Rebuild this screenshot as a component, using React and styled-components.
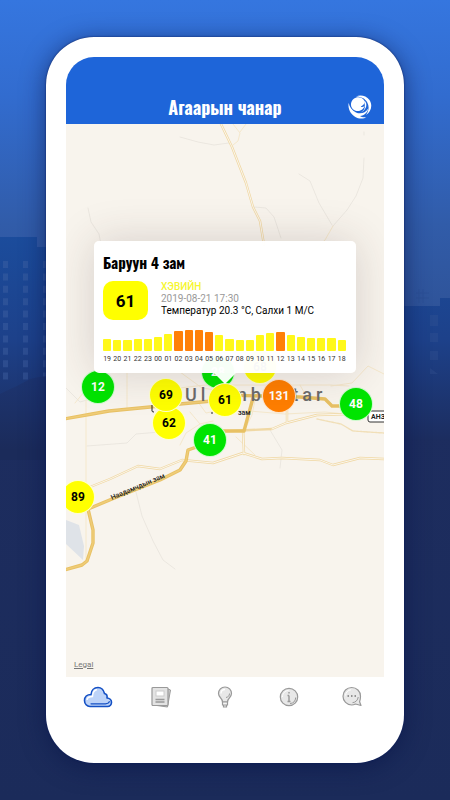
import React, { useState } from 'react';
import styled, { createGlobalStyle } from 'styled-components';

const YELLOW = '#ffff00';
const GREEN = '#00e400';
const ORANGE = '#ff7e00';

// x is measured from the middle of the map, y from its top
const stations = [
  { value: 12, x: -127, y: 263, color: GREEN },
  { value: 28, x: -7, y: 248, color: GREEN },
  { value: 68, x: 35, y: 243, color: YELLOW },
  { value: 62, x: -56, y: 299, color: YELLOW },
  { value: 69, x: -59, y: 271, color: YELLOW },
  { value: 131, x: 54, y: 272, color: ORANGE },
  { value: 48, x: 131, y: 280, color: GREEN },
  { value: 41, x: -15, y: 316, color: GREEN },
  { value: 61, x: 0, y: 276, color: YELLOW },
  { value: 89, x: -147, y: 373, color: YELLOW },
];

const hours = [
  ['19', 12],
  ['20', 11],
  ['21', 11],
  ['22', 12],
  ['23', 12],
  ['00', 14],
  ['01', 17],
  ['02', 20],
  ['03', 21],
  ['04', 21],
  ['05', 19],
  ['06', 16],
  ['07', 12],
  ['08', 11],
  ['09', 11],
  ['10', 16],
  ['11', 18],
  ['12', 19],
  ['13', 16],
  ['14', 14],
  ['15', 13],
  ['16', 13],
  ['17', 13],
  ['18', 11],
];

const Skyline = () => (
  <Backdrop viewBox='0 0 450 800' preserveAspectRatio='none' aria-hidden='true'>
    <defs>
      <linearGradient id='sky' x1='0' y1='0' x2='0' y2='1'>
        <stop offset='0' stopColor='#3576df' />
        <stop offset='0.12' stopColor='#326ccf' />
        <stop offset='0.28' stopColor='#315ca9' />
        <stop offset='0.38' stopColor='#2f549a' />
        <stop offset='0.52' stopColor='#1d2d5f' />
        <stop offset='1' stopColor='#1b2b5a' />
      </linearGradient>
      <linearGradient id='tower' x1='0' y1='237' x2='0' y2='440' gradientUnits='userSpaceOnUse'>
        <stop offset='0' stopColor='#1b4c9c' />
        <stop offset='0.5' stopColor='#1d418a' />
        <stop offset='1' stopColor='#1c2d5f' />
      </linearGradient>
      <linearGradient id='hill' x1='0' y1='376' x2='0' y2='450' gradientUnits='userSpaceOnUse'>
        <stop offset='0' stopColor='#1d3571' />
        <stop offset='1' stopColor='#1b2b5a' />
      </linearGradient>
    </defs>
    <rect width='450' height='800' fill='url(#sky)' />
    <path d='M0 237H37V247H60V440H0Z' fill='url(#tower)' />
    <path d='M390 306H440V298H450V440H390Z' fill='url(#tower)' />
    <g fill='#4566a6' opacity='0.4'>
      {Array.from({ length: 10 }, (_, i) => (
        <path key={i} d={`M3 ${261 + i * 12.4}h5v7h-5zM23 ${261 + i * 12.4}h5v7h-5zM43 ${261 + i * 12.4}h5v7h-5z`} />
      ))}
    </g>
    <path d='M430 315h8v11h-8zM430 333h8v9h-8zM430 351h8v9h-8zM430 368l8 6h-8z' fill='#3f5b98' opacity='0.25' />
    <path d='M419 289v14M423 289v14M416 293h13M416 298h13' stroke='#284b8f' strokeWidth='0.6' opacity='0.5' />
    <path d='M0 394C12 388 22 384 30 379C42 375 60 376 60 376V460H0Z' fill='url(#hill)' />
  </Backdrop>
);

const MapDrawing = () => (
  <Terrain viewBox='66 124 318 554' preserveAspectRatio='xMidYMin slice' aria-hidden='true'>
    <g fill='none' strokeLinejoin='round' strokeLinecap='round'>
      <g stroke='#e5e1da' strokeWidth='0.7'>
        <path d='M180 137L198 142L214 145L229 143' />
        <path d='M364 132V135' />
        <path d='M364 158L363 178L356 196L347 210L333 226' />
        <path d='M299 174L310 181L319 203L332 225' />
        <path d='M254 207L266 208L274 217L281 238' />
        <path d='M88 208L91 222L99 234L102 250' />
        <path d='M87 446L127 443L136 434L160 432L182 424' />
        <path d='M136 492L142 516L153 541L163 560L175 569' />
        <path d='M270 430L282 450L280 468' />
        <path d='M66 388L80 402L94 398' />
      </g>
      <g stroke='#f5e8cc' strokeWidth='1'>
        <path d='M333 226L325 240L310 254' />
        <path d='M233 124L240 133L238 141L233 145' />
        <path d='M246 124L240 132' />
        <path d='M86 400V560' />
        <path d='M127 372V408M86 380L96 392M75 403L84 392L91 396' />
        <path d='M180 388L205 385L240 385L330 385L349 386' />
        <path d='M190 412L200 424L186 433L180 445M200 424L213 421' />
        <path d='M331 386L352 383L368 366L384 374' />
        <path d='M198 402L206 413L225 409L285 414L325 412L384 418' />
        <path d='M256 395L252 415L244 431V455' />
        <path d='M180 372L202 388L230 392' />
        <path d='M300 385L305 394M255 455L236 437' />
      </g>
      <path d='M317 419L341 424L353 431L384 433' stroke='#f1dfb8' strokeWidth='1.4' strokeDasharray='2 1' />
      <g>
        <g stroke='#f0d8a4' strokeWidth='2.4'>
          <path d='M220 122L232 147L246 183L253 207L260 221L264 245' />
          <path d='M66 504L80 491L110 479L138 466L160 469L182 460L213 463L243 453L262 459L282 458L320 460L333 465L360 458L384 459' />
          <path d='M198 432L230 431L272 429L286 423L317 415L384 413' />
          <path d='M287 394V422M243 430L244 454' />
        </g>
        <g stroke='#fbf6ec' strokeWidth='1'>
          <path d='M220 122L232 147L246 183L253 207L260 221L264 245' />
          <path d='M66 504L80 491L110 479L138 466L160 469L182 460L213 463L243 453L262 459L282 458L320 460L333 465L360 458L384 459' />
          <path d='M272 429L286 423L317 415L384 413M287 394V422M243 430L244 454' />
        </g>
      </g>
      <g stroke='#e8c164' strokeWidth='3.4'>
        <path d='M64 419L92 414L109 411L150 407L180 404L212 401' />
        <path d='M88 509L112 499L160 480L180 470L186 461L188 450L205 444' />
        <path d='M212 431H244L253 398' />
        <path d='M225 395L262 396L300 397L325 399L332 406H342' />
        <path d='M88 509L93 530L93 543L87 561L82 565L64 570' />
      </g>
      <g stroke='#efcc78' strokeWidth='1.4'>
        <path d='M64 419L92 414L109 411L150 407L180 404L212 401' />
        <path d='M88 509L112 499L160 480L180 470L186 461L188 450L205 444' />
        <path d='M88 509L93 530L93 543L87 561L82 565L64 570' />
      </g>
    </g>
    <path d='M66 520L79 525L84 546L83 560L66 544Z' fill='#dfe3e8' />
    <path d='M152 405V411Q152 412 154 412M212 412v2' fill='none' stroke='#222' strokeWidth='1' />
    <rect x='368' y='411' width='24' height='11' rx='2' fill='#fff' stroke='#333' />
    <MapText x='371' y='419' $bold>
      АНЗ
    </MapText>
    <MapText x='238' y='415'>
      зам
    </MapText>
    <MapText x='112' y='500' transform='rotate(-23 112 500)'>
      Наадамчдын зам
    </MapText>
    <CityText x='185' y='401'>
      Ulaanbaatar
    </CityText>
  </Terrain>
);

const LogoIcon = () => (
  <svg width='24' height='24' viewBox='0 0 24 24' fill='#fff' aria-hidden='true'>
    <path d='M8 1.500C12 -0.300 18 0.300 21.500 5C25 10.500 23 17 18 20C20.800 16 21.500 11.500 19.300 7.500C17.300 3.500 13 1.600 8 1.500Z' />
    <path d='M0.700 8C-0.500 14 3 21 10 23.300C14 24 17 23.300 18 22.300C15 22.500 13 22 12 21C16.500 20.500 19.500 17.500 20.300 13.500C17.500 18 12.500 19.500 8 17.500C4 15.500 1.500 12 0.700 8Z' />
    <path d='M16.500 5.500C20 9 18.500 15 12.500 17.800C16 15.500 17 13.500 16.800 11Z' />
    <path d='M15.500 4.500C13 1.800 8.500 1.500 5.500 4C2.500 6.500 2.200 11 4.500 13.700C7 16.500 11.500 17 14.500 14.300C15.500 13.400 16.200 12.300 16.500 11C15 12.500 13.500 12.300 12.800 11.500C14.500 11 16.500 9 17 7Z' />
  </svg>
);

const CloudIcon = () => (
  <svg width='30' height='24' viewBox='0 0 30 24' fill='none' aria-hidden='true'>
    <path
      d='M7 21.500H24.500C27 21.500 28.500 19.500 28.500 17.300C28.500 15 26.500 13.200 24 13C24.500 10.500 23.500 9 21.500 8.500C20.500 4.500 18 2.500 15 2.500C11 2.500 8.200 5.500 8 9.500C4 9.500 1.500 12 1.500 15.500C1.500 19 4 21.500 7 21.500Z'
      fill='#bdd3f8'
      stroke='#1450c4'
      strokeWidth='1.600'
      strokeLinejoin='round'
    />
    <path d='M4 15C4.300 12.500 6 11.500 9.500 11.500C9.700 7.500 11.500 5 14 4.500' stroke='#fff' strokeWidth='1.400' />
    <path d='M8 18.800H22.500C24.500 18.800 26 18.200 26.300 16.500' stroke='#1450c4' strokeWidth='1.200' strokeLinecap='round' />
  </svg>
);

const NewsIcon = () => (
  <svg width='22' height='24' viewBox='0 0 22 24' fill='none' stroke='#999' aria-hidden='true'>
    <path d='M18 4L20.500 5L17.500 22L7 20.500' fill='#ccc' strokeLinejoin='round' />
    <rect x='2' y='2.500' width='16' height='18' rx='1' fill='#e3e3e3' strokeWidth='1.200' />
    <rect x='6' y='6' width='8' height='5' fill='#fff' stroke='#ccc' />
    <path d='M5.500 14.500H14.500M5.500 17H14.500' strokeWidth='1.400' />
  </svg>
);

const BulbIcon = () => (
  <svg width='18' height='24' viewBox='0 0 18 24' fill='none' stroke='#999' aria-hidden='true'>
    <path
      d='M6.500 17C6.500 13 2.500 12.500 2.500 8.500C2.500 4.800 5.300 2 9 2C12.700 2 15.500 4.800 15.500 8.500C15.500 12.500 11.500 13 11.500 17Z'
      fill='#e8e8e8'
      strokeWidth='1.200'
    />
    <path d='M5 8.500C5 6 6.500 4.500 9 4.500' stroke='#fff' strokeWidth='1.300' />
    <path d='M13.500 8.500C13.500 11 12 12 10 12.500' />
    <path d='M6.500 17H11.500V20H6.500ZM7.500 20V22H10.500V20' fill='#f4f4f4' strokeWidth='1.200' />
  </svg>
);

const InfoIcon = () => (
  <svg width='22' height='24' viewBox='0 0 22 24' fill='none' stroke='#999' aria-hidden='true'>
    <circle cx='11' cy='12' r='8.700' fill='#e8e8e8' strokeWidth='1.200' />
    <path d='M4.500 12C4.500 8.500 7 5.500 10.500 5.500' stroke='#fff' />
    <path d='M12 18.500C15.500 18.500 17.500 16 17.700 12.500' />
    <path d='M11 10.500V16.500M9.500 10.500H11M9.500 16.500H12.500M11 7V8.500' strokeWidth='1.400' />
  </svg>
);

const ChatIcon = () => (
  <svg width='22' height='24' viewBox='0 0 22 24' fill='none' stroke='#999' aria-hidden='true'>
    <path
      d='M14.500 19C13.300 19.600 12 20 10.700 20C5.800 20 2 16 2 11.200C2 6.300 5.800 2.500 10.700 2.500C15.600 2.500 19.500 6.300 19.500 11.200C19.500 13.300 19.200 15.200 18.600 16.700L20 20.500Z'
      fill='#e8e8e8'
      strokeWidth='1.200'
      strokeLinejoin='round'
    />
    <path d='M4.500 10.500C4.800 7.500 7 5 10 4.800' stroke='#fff' />
    <path d='M11.500 17.700C14.500 17.500 17 15 17.200 12' />
    <path d='M6.500 11H8M10 11H11.500M13.500 11H15' stroke='#777' strokeWidth='1.500' />
  </svg>
);

const tabs = [
  { label: 'Агаарын чанар', Icon: CloudIcon },
  { label: 'Мэдээ', Icon: NewsIcon },
  { label: 'Зөвлөгөө', Icon: BulbIcon },
  { label: 'Мэдээлэл', Icon: InfoIcon },
  { label: 'Холбоо барих', Icon: ChatIcon },
];

const StationCard = () => (
  <Card>
    <CardTitle>Баруун 4 зам</CardTitle>
    <Summary>
      <Index>61</Index>
      <Details>
        <Level>ХЭВИЙН</Level>
        <Time>2019-08-21 17:30</Time>
        <Weather>Температур 20.3 °C, Салхи 1 М/С</Weather>
      </Details>
    </Summary>
    <Chart>
      {hours.map(([hour, size]) => (
        <Hour key={hour}>
          <Bar $high={size > 18} style={{ height: size }} />
          <HourLabel>{hour}</HourLabel>
        </Hour>
      ))}
    </Chart>
  </Card>
);

const App = () => {
  const [active, setActive] = useState(0);

  return (
    <Page>
      <GlobalStyle />
      <Skyline />
      <Phone>
        <Header>
          <Title>Агаарын чанар</Title>
          <LogoButton type='button' aria-label='Лого'>
            <LogoIcon />
          </LogoButton>
        </Header>
        <MapArea>
          <MapDrawing />
          {stations.map(({ value, x, y, color }) => (
            <Pin key={value} type='button' $x={x} $y={y} $color={color}>
              {value}
            </Pin>
          ))}
          <StationCard />
          <Legal href='#legal'>Legal</Legal>
        </MapArea>
        <TabBar>
          {tabs.map(({ label, Icon }, i) => (
            <Tab
              key={label}
              type='button'
              aria-label={label}
              aria-current={active === i ? 'page' : undefined}
              onClick={() => setActive(i)}
            >
              <Icon />
            </Tab>
          ))}
        </TabBar>
      </Phone>
    </Page>
  );
};

export default App;

const GlobalStyle = createGlobalStyle`
  * {
    box-sizing: border-box;
  }

  body {
    margin: 0;
    font-family: Roboto, 'Liberation Sans', sans-serif;
    background: #1b2b5a;
  }

  button {
    padding: 0;
    border: 0;
    background: none;
    font-family: inherit;
    cursor: pointer;
  }
`;

const condensed = `'Oswald', 'Roboto Condensed', 'Liberation Sans Narrow', sans-serif`;

const Page = styled.div`
  position: relative;
  display: flex;
  min-height: 100vh;
  padding: 37px 46px;
`;

const Backdrop = styled.svg`
  position: absolute;
  inset: 0;
  width: 100%;
  height: 100%;
`;

const Phone = styled.main`
  position: relative;
  display: flex;
  flex: 1;
  flex-direction: column;
  min-width: 0;
  padding: 20px;
  background: #fff;
  border-radius: 48px;
  box-shadow: 0 0 2px #0a1c5c, 0 4px 24px rgba(8, 20, 70, 0.6);
`;

const Header = styled.header`
  display: grid;
  grid-template-columns: 1fr auto 1fr;
  align-items: center;
  padding: 32px 12px 0;
  height: 67px;
  background: #1e65d9;
  border-radius: 28px 28px 0 0;
`;

const Title = styled.h1`
  grid-column: 2;
  margin: 0;
  color: #fff;
  font: bold 18px/28px ${condensed};
`;

const LogoButton = styled.button`
  display: flex;
  justify-self: end;
`;

const MapArea = styled.section`
  position: relative;
  flex: 1;
  min-height: 480px;
  padding: 117px 28px 40px;
  overflow: hidden;
  background: #f8f4ed;
`;

const Terrain = styled.svg`
  position: absolute;
  inset: 0;
  width: 100%;
  height: 100%;
`;

const MapText = styled.text`
  fill: #222;
  font-size: 7px;
  font-weight: ${({ $bold }) => ($bold ? 700 : 500)};
`;

const CityText = styled.text`
  fill: #6b6b6b;
  font-size: 18px;
  font-weight: 500;
  letter-spacing: 4px;
`;

const Pin = styled.button`
  position: absolute;
  top: ${({ $y }) => $y}px;
  left: calc(50% + ${({ $x }) => $x}px);
  width: 34px;
  height: 34px;
  border: 1px solid rgba(255, 255, 255, 0.8);
  border-radius: 50%;
  transform: translate(-50%, -50%);
  background: ${({ $color }) => $color};
  color: ${({ $color }) => ($color === YELLOW ? '#000' : '#fff')};
  font-size: 12px;
  font-weight: 700;
`;

const Card = styled.article`
  position: relative;
  padding: 11px 10px 9px 9px;
  border-radius: 5px;
  background: rgba(255, 255, 255, 0.97);
  box-shadow: 0 0 44px rgba(60, 40, 40, 0.18);

  &::after {
    content: '';
    position: absolute;
    top: 100%;
    left: 50%;
    border: solid transparent;
    border-width: 11px 11px 0;
    border-top-color: #f4fff4;
    transform: translateX(-50%);
  }
`;

const CardTitle = styled.h2`
  margin: 0 0 9px;
  color: #000;
  font: bold 15px/20px ${condensed};
`;

const Summary = styled.div`
  display: flex;
  gap: 13px;
  margin-bottom: 10px;
`;

const Index = styled.strong`
  display: flex;
  align-items: center;
  justify-content: center;
  width: 45px;
  height: 39px;
  border-radius: 10px;
  background: ${YELLOW};
  color: #000;
  font-size: 17px;
`;

const Details = styled.div`
  font-size: 10px;
  line-height: 12px;
`;

const Level = styled.div`
  color: #f6f630;
  font-weight: 500;
`;

const Time = styled.div`
  color: #999;
`;

const Weather = styled.div`
  color: #000;
`;

const Chart = styled.div`
  display: flex;
  align-items: flex-end;
  gap: 2px;
`;

const Hour = styled.div`
  display: flex;
  flex: 1;
  flex-direction: column;
  align-items: center;
  min-width: 0;
`;

const Bar = styled.div`
  width: 100%;
  border-radius: 1px;
  background: ${({ $high }) => ($high ? '#ff8008' : '#fff81a')};
`;

const HourLabel = styled.span`
  margin-top: 4px;
  color: #333;
  font-size: 7px;
  line-height: 9px;
`;

const Legal = styled.a`
  position: absolute;
  bottom: 7px;
  left: 8px;
  color: #777;
  font-size: 8px;
  line-height: 10px;
`;

const TabBar = styled.nav`
  display: flex;
  height: 66px;
  padding-top: 8px;
`;

const Tab = styled.button`
  display: flex;
  flex: 1;
  align-items: flex-start;
  justify-content: center;
`;
